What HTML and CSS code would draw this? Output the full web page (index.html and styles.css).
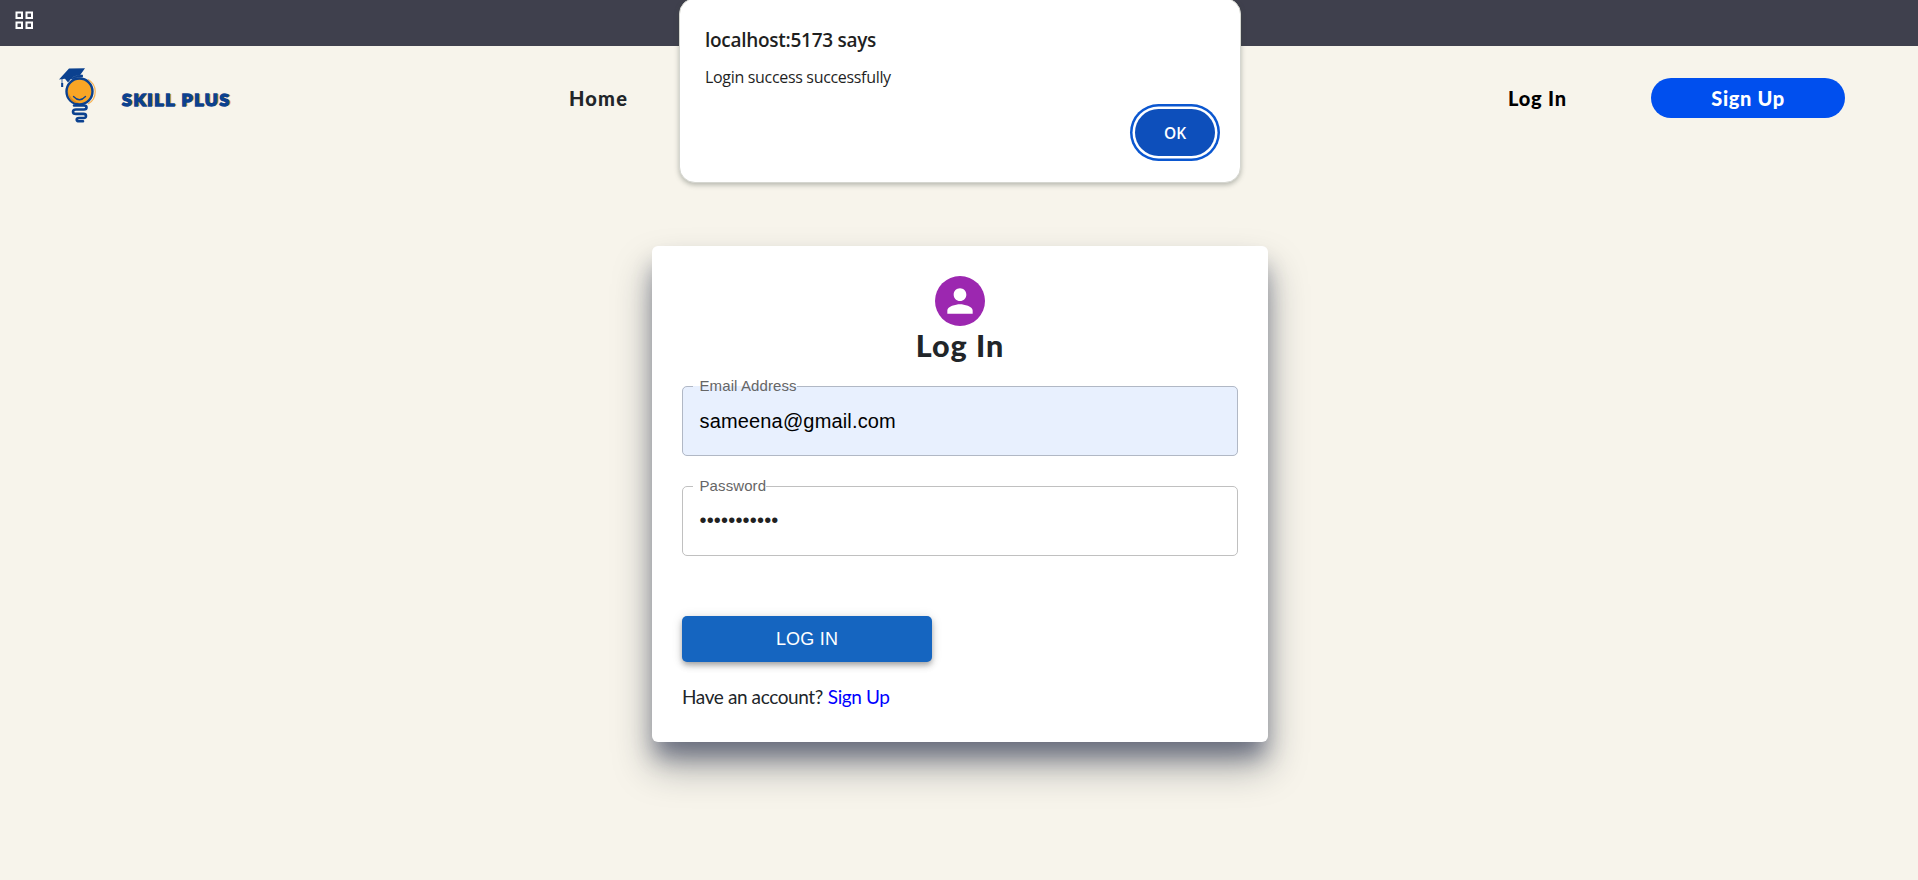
FILE: index.html
```
<!DOCTYPE html>
<html lang="en">
<head>
<meta charset="utf-8">
<title>Skill Plus</title>
<link rel="stylesheet" href="styles.css">
</head>
<body>
<div class="bookmarks">
  <svg class="apps" viewBox="0 0 19 19" fill="none" stroke="#fff" stroke-width="2"><path d="M1.5 1.5h5.5v5.5h-5.5zM11.5 1.5h5.5v5.5h-5.5zM1.5 11.5h5.5v5.5h-5.5zM11.5 11.5h5.5v5.5h-5.5z"/></svg>
</div>
<header class="header">
  <div class="brand">
    <svg class="logo" viewBox="0 0 38 56">
      <path d="M29 11.500a14 14 0 0 1 0 24.500" fill="none" stroke="#f7b254" stroke-width="1.200"/>
      <circle cx="20.500" cy="23.500" r="13" fill="#f9a525" stroke="#0b418f" stroke-width="2.400"/>
      <path d="M9.500 19q-1 12 11 16q-8 1-11-7z" fill="#d98a1d"/>
      <path d="M14.500 28.500q6 6.500 12 0" fill="none" stroke="#0b418f" stroke-width="1.300" stroke-linecap="round"/>
      <path d="M0 11.500 10 .500l16-.300-5 7q-7-.500-12 7.300l-3-3.700z" fill="#0b418f"/>
      <path d="M12 10.500q5-4 11.500-3.500v2q-5-.500-10 2zM3 11v8" fill="#0b418f" stroke="#0b418f" stroke-width=".800"/>
      <path d="M3.200 15v4" stroke="#0b418f" stroke-width="2"/>
      <path d="M15 37.500h10q2.500 0 2.500 2t-2.500 2h-8q-3 0-3 2.200t3 2.200h7.500q2.500 0 2.500 2.100t-2.500 2h-4.500q-2.300 0-2.300 1.700t2.300 1.600h4" fill="none" stroke="#0b418f" stroke-width="2.600" stroke-linecap="round"/>
    </svg>
    <span class="wordmark">SKILL PLUS</span>
  </div>
  <a class="home">Home</a>
  <a class="login-link">Log In</a>
  <a class="signup-btn">Sign Up</a>
</header>
<main class="card">
  <div class="avatar"><svg viewBox="0 0 24 24" fill="#fff"><path d="M12 12c2.210 0 4-1.790 4-4s-1.790-4-4-4-4 1.790-4 4 1.790 4 4 4zm0 2c-2.670 0-8 1.340-8 4v2h16v-2c0-2.660-5.330-4-8-4z"/></svg></div>
  <h1 class="title">Log In</h1>
  <fieldset class="field filled"><legend>Email Address</legend><div class="value">sameena@gmail.com</div></fieldset>
  <fieldset class="field"><legend>Password</legend><div class="value dots">•••••••••••</div></fieldset>
  <button class="submit">LOG IN</button>
  <p class="account"><span class="question">Have an account?</span><a class="link">Sign Up</a></p>
</main>
<div class="dialog">
  <div class="dialog-title">localhost:5173 says</div>
  <div class="dialog-text">Login success successfully</div>
  <button class="ok">OK</button>
</div>
</body>
</html>
```
FILE: styles.css
```
* { box-sizing: border-box; }
body { margin: 0; height: 880px; overflow: hidden; background: #f7f4eb; color: #212529; font-family: Lato, sans-serif; }
.bookmarks { height: 46px; background: #3f404d; padding: 11px 15px; }
.apps { display: block; width: 19px; height: 19px; }
.header { height: 104px; display: flex; align-items: center; padding: 0 73px 0 59px; font-size: 20px; font-weight: 900; }
.brand { display: flex; align-items: center; width: 510px; }
.logo { width: 38px; height: 56px; margin-top: -4px; }
.wordmark { margin: 2px 0 0 25px; color: #0b418f; font-size: 17.500px; letter-spacing: 1.750px; -webkit-text-stroke: 1.500px #0b418f; text-shadow: 2px 0 #e9a64a; }
.home { letter-spacing: 1.200px; }
.login-link { margin-left: auto; width: 143px; color: #000; letter-spacing: .8px; }
.signup-btn { width: 194px; height: 40px; border-radius: 20px; background: #004fee; color: #fff; line-height: 41px; text-align: center; letter-spacing: .65px; }
.card { width: 616px; height: 496px; margin: 96px auto 0 652px; padding: 30px; background: #fff; border-radius: 6px; box-shadow: 0 24px 38px rgba(20,30,45,.38), 0 17px 22px -4px rgba(20,30,80,.42); }
.avatar { width: 50px; height: 50px; border-radius: 50%; background: #9c27b0; margin: 0 auto; display: flex; align-items: center; justify-content: center; }
.avatar svg { width: 38px; height: 38px; flex: none; }
.title { margin: 0; height: 50px; font-size: 30.500px; line-height: 38px; font-weight: 900; text-align: center; letter-spacing: 1px; }
.field { height: 80px; margin: 0; padding: 0 10px; min-width: 0; border: 1px solid #c0c0c0; border-radius: 5px; font-family: "Liberation Sans", sans-serif; }
.field + .field { margin-top: 20px; }
.filled { background: #e8f0fe; border-color: #b1b8c5; }
.field legend { padding: 0 0 0 6.500px; height: 20px; line-height: 20px; font-size: 15px; letter-spacing: .1px; color: #666; }
.value { padding-left: 6.500px; font-size: 20px; line-height: 28px; margin-top: 11px; color: #000; letter-spacing: .16px; }
.dots { margin-top: 10px; color: #212121; letter-spacing: .18px; }
.submit { display: block; width: 250px; height: 46px; margin-top: 60px; padding: 0; border: 0; border-radius: 5px; background: #1565c0; color: #fff; font: 18px "Liberation Sans", sans-serif; letter-spacing: .2px; box-shadow: 0 3px 5px -1px rgba(0,0,0,.2), 0 4px 7px rgba(0,0,0,.16), 0 1px 12px rgba(0,0,0,.12); }
.account { display: flex; gap: 5px; margin: 20px 0 0; font-size: 19px; line-height: 30px; letter-spacing: -.4px; }
.link { color: #00f; }
.dialog { position: absolute; left: 679px; top: -2px; width: 562px; height: 185px; padding: 26px 25px 0; background: #fff; border: 1px solid #d5d6d0; border-radius: 16px; box-shadow: 0 2px 5px rgba(60,70,60,.35); font-family: "Open Sans", sans-serif; color: #1f1f1f; }
.dialog-title { font-size: 19px; line-height: 30px; font-weight: 600; letter-spacing: -.28px; }
.dialog-text { margin-top: 10px; font-size: 16px; line-height: 24px; letter-spacing: -.32px; }
.ok { display: block; width: 80px; height: 47px; margin: 20px 0 0 auto; padding: 0; border: 0; border-radius: 24px; background: #0d4fbb; color: #fff; font: 600 15.500px "Open Sans", sans-serif; box-shadow: 0 0 0 2.500px #fff, 0 0 0 5px #0b57d0; }
```
